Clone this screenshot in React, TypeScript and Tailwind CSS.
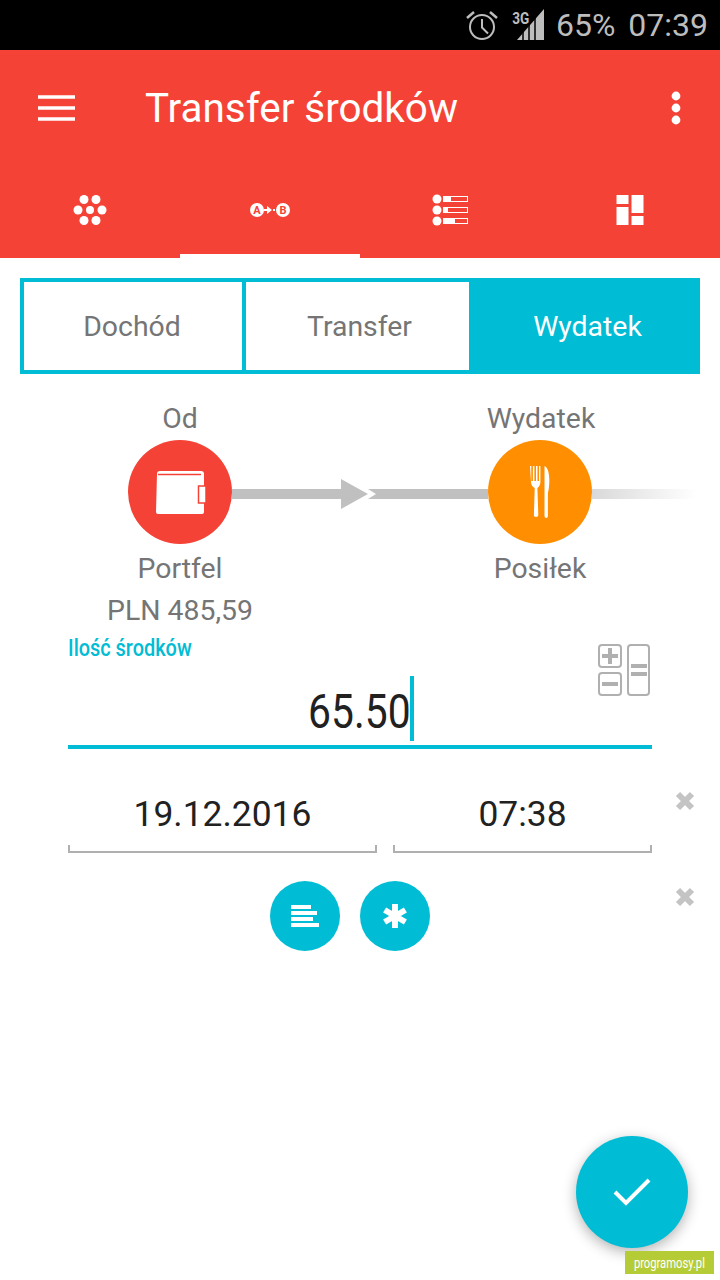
import React from "react";

const X = () => (
  <svg width="20" height="20" viewBox="0 0 20 20" className="block">
    <path d="M3 3 L17 17 M17 3 L3 17" stroke="#c4c4c4" strokeWidth="6" />
  </svg>
);

const Bracket = ({ text, className }: { text: string; className: string }) => (
  <div className={"flex flex-col " + className}>
    <div className="h-[61px] flex items-center justify-center text-[35.4px] leading-none text-[#212121]">{text}</div>
    <div className="h-[8px] border-x-2 border-b-2 border-[#b0b0b0]" />
  </div>
);

export default function App() {
  return (
    <div className="relative w-[720px] h-[1280px] overflow-hidden bg-white font-['Roboto',sans-serif]">
      {/* status bar */}
      <div className="h-[50px] bg-black flex items-center justify-end pr-[12px] text-[#bdbdbd] text-[32px] leading-none">
        <svg width="34" height="32" viewBox="0 0 34 32" className="mr-[13px]" fill="none" stroke="#bdbdbd" strokeWidth="2">
          <circle cx="17" cy="18" r="12" />
          <path d="M17 10v8.5l6 6" />
          <path d="M2 9 L9 3 M32 9 L25 3" strokeWidth="2.5" />
        </svg>
        <div className="relative w-[34px] h-[32px] mr-[10px]">
          <svg width="34" height="32" viewBox="0 0 34 32" className="absolute inset-0">
            <path d="M5 31 L32 0 V31 Z" fill="#bdbdbd" />
            <path d="M11 20 V31 M17 14 V31 M23 8 V31" stroke="#000" strokeWidth="1.5" />
          </svg>
          <span className="absolute left-[-2px] top-[1px] text-[17px] font-bold leading-none text-[#bdbdbd] scale-x-[0.8]">3G</span>
        </div>
        <span className="mr-[13px]">65%</span>
        <span>07:39</span>
      </div>

      {/* app bar */}
      <div className="h-[208px] bg-[#f44336] flex flex-col">
        <div className="h-[116px] flex items-center pl-[38px] pr-[38px]">
          <svg width="37" height="26" viewBox="0 0 37 26">
            <path d="M0 2h37M0 13h37M0 24h37" stroke="#fff" strokeWidth="3.6" />
          </svg>
          <h1 className="ml-[70px] pt-[2px] flex-1 text-white text-[40.4px] leading-none font-normal">Transfer środków</h1>
          <svg width="10" height="34" viewBox="0 0 10 34" className="mr-[1px]">
            <circle cx="5" cy="5" r="4.4" fill="#fff" />
            <circle cx="5" cy="17" r="4.4" fill="#fff" />
            <circle cx="5" cy="29" r="4.4" fill="#fff" />
          </svg>
        </div>
        <div className="flex-1 grid grid-cols-4">
          <div className="flex items-center justify-center pb-[4px]">
            <svg width="34" height="30" viewBox="0 0 34 30" fill="#fff">
              <circle cx="11" cy="4.5" r="4.5" /><circle cx="23" cy="4.5" r="4.5" />
              <circle cx="5" cy="15" r="4.5" /><circle cx="17" cy="15" r="4" /><circle cx="29" cy="15" r="4.5" />
              <circle cx="11" cy="25.5" r="4.5" /><circle cx="23" cy="25.5" r="4.5" />
            </svg>
          </div>
          <div className="flex items-center justify-center border-b-4 border-white">
            <svg width="40" height="16" viewBox="0 0 40 16">
              <circle cx="7" cy="8" r="7" fill="#fff" />
              <circle cx="33" cy="8" r="7" fill="#fff" />
              <text x="7" y="12" fontSize="11" fontWeight="700" textAnchor="middle" fill="#f44336" fontFamily="Roboto">A</text>
              <text x="33" y="12" fontSize="11" fontWeight="700" textAnchor="middle" fill="#f44336" fontFamily="Roboto">B</text>
              <path d="M14 7h3V4l5 4-5 4V9h-3z M23 7h2v2h-2z" fill="#fff" />
            </svg>
          </div>
          <div className="flex items-center justify-center pb-[4px]">
            <svg width="36" height="32" viewBox="0 0 36 32" fill="#fff">
              <circle cx="5" cy="5" r="4.5" /><circle cx="5" cy="16" r="4.5" /><circle cx="5" cy="27" r="4.5" />
              <rect x="11.5" y="2.5" width="24" height="5" fill="none" stroke="#fff" />
              <rect x="11" y="2" width="8" height="6" />
              <rect x="11.5" y="13.5" width="24" height="5" fill="none" stroke="#fff" />
              <rect x="11" y="13" width="5" height="6" />
              <rect x="11.5" y="24.5" width="24" height="5" fill="none" stroke="#fff" />
              <rect x="11" y="24" width="12" height="6" />
            </svg>
          </div>
          <div className="flex items-center justify-center pb-[4px]">
            <svg width="28" height="30" viewBox="0 0 28 30" fill="#fff">
              <rect x="0.5" y="0" width="12" height="9" /><rect x="0.5" y="12" width="12" height="18" />
              <rect x="15.5" y="0" width="12" height="18" /><rect x="15.5" y="21" width="12" height="9" />
            </svg>
          </div>
        </div>
      </div>

      {/* segmented control */}
      <div className="mx-[20px] mt-[20px] h-[96px] border-4 border-[#00bcd4] grid grid-cols-[218px_227px_1fr] text-[28.4px] text-[#757575]">
        <div className="flex items-center justify-center pt-[3px] pr-[2px]">Dochód</div>
        <div className="flex items-center justify-center pt-[3px] pl-[4px] border-l-4 border-[#00bcd4]">Transfer</div>
        <div className="flex items-center justify-center pt-[3px] pl-[10px] bg-[#00bcd4] text-white">Wydatek</div>
      </div>

      {/* flow */}
      <div className="grid grid-cols-2 mt-[27px] h-[36px] text-[28.4px] leading-[36px] text-[#757575] text-center">
        <div>Od</div>
        <div className="pl-[2px]">Wydatek</div>
      </div>
      <div className="flex items-center mt-[3px] pl-[128px] pr-[24px] h-[104px]">
        <div className="w-[104px] h-[104px] rounded-full bg-[#f44336] flex items-center justify-center shrink-0">
          <svg width="52" height="46" viewBox="0 0 52 46" className="ml-[2px]">
            <path d="M2 5a3 3 0 0 1 3-3h41a3 3 0 0 1 3 3v38a2 2 0 0 1-2 2H3a2 2 0 0 1-2-2z" fill="#fff" />
            <path d="M3 5.5 h43" stroke="#f44336" strokeWidth="1.6" />
            <rect x="43.5" y="17" width="7.5" height="17" fill="#fff" stroke="#f44336" strokeWidth="1.5" />
          </svg>
        </div>
        <div className="flex-1 flex items-center mt-[4px] h-[30px] overflow-hidden">
          <svg width="256" height="30" viewBox="0 0 256 30" className="block">
            <path d="M0 10h109V0l27 15-27 15V20H0z" fill="#c0c0c0" />
            <path d="M136 10h120v10H136l8-5z" fill="#c0c0c0" />
          </svg>
        </div>
        <div className="w-[104px] h-[104px] rounded-full bg-[#ff8f00] flex items-center justify-center shrink-0">
          <svg width="20" height="54" viewBox="0 0 20 54" fill="#fff">
            <path d="M0 1h1.3v15h1.6V1h1.5v15H6V1h1.5v15H9V1h1.4v16c0 3.5-2 5-3 6l.9 27c0 2.5-4.6 2.5-4.4 0l.8-27c-1.5-1-3.7-2.5-3.7-6z" />
            <path d="M14.5 1c3.5 1.5 5 8 4.8 16-.1 5-1 10-1.4 11V51c0 2.5-3.4 2.5-3.4 0z" />
          </svg>
        </div>
        <div className="w-[104px] h-[10px] mt-[4px] bg-gradient-to-r from-[#d9d9d9] to-white shrink-0" />
      </div>
      <div className="grid grid-cols-2 text-[28.4px] text-[#757575] text-center mt-[7px]">
        <div className="leading-[36px]">
          Portfel
          <div className="mt-[6px]">PLN 485,59</div>
        </div>
        <div className="leading-[36px]">Posiłek</div>
      </div>

      {/* amount */}
      <div className="relative mx-[68px] mt-[5px]">
        <div className="text-[#00bcd4] text-[24px] font-medium leading-[28px] origin-left scale-x-[0.83] w-max">Ilość środków</div>
        <div className="h-[86px] mt-[1px] flex items-start justify-center border-b-4 border-[#00bcd4] pt-[13px] pr-[16px]">
          <span className="text-[#212121] text-[48px] leading-[72px] scale-x-[0.85] origin-right">65.50</span>
          <span className="w-[4px] h-[65px] bg-[#00bcd4]" />
        </div>
        <div className="absolute right-[2px] top-[10px] flex gap-[5px]">
          <div className="flex flex-col gap-[4px]">
            <div className="w-[24px] h-[24px] rounded-[4px] border-2 border-[#b0b0b0] flex items-center justify-center">
              <svg width="16" height="16" viewBox="0 0 16 16"><path d="M8 0v16M0 8h16" stroke="#b0b0b0" strokeWidth="4" /></svg>
            </div>
            <div className="w-[24px] h-[24px] rounded-[4px] border-2 border-[#b0b0b0] flex items-center justify-center">
              <div className="w-[16px] h-[4px] bg-[#b0b0b0]" />
            </div>
          </div>
          <div className="w-[23px] h-[52px] rounded-[4px] border-2 border-[#b0b0b0] flex flex-col items-center gap-[4px] pt-[18px]">
            <div className="w-[16px] h-[4px] bg-[#b0b0b0]" />
            <div className="w-[16px] h-[4px] bg-[#b0b0b0]" />
          </div>
        </div>
      </div>

      {/* date and time */}
      <div className="flex mt-[35px] pl-[68px] pr-[25px]">
        <Bracket text="19.12.2016" className="w-[309px]" />
        <Bracket text="07:38" className="w-[259px] ml-[16px]" />
        <div className="ml-[23px] mt-[7px]"><X /></div>
      </div>

      {/* extras */}
      <div className="flex mt-[28px] pl-[270px] pr-[25px]">
        <button className="w-[70px] h-[70px] rounded-full bg-[#00bcd4] flex items-center justify-center">
          <svg width="28" height="22" viewBox="0 0 28 22" fill="#fff">
            <rect x="0" y="0" width="20" height="4" /><rect x="0" y="6" width="26" height="4" />
            <rect x="0" y="12" width="22" height="4" /><rect x="0" y="18" width="28" height="4" />
          </svg>
        </button>
        <button className="ml-[20px] w-[70px] h-[70px] rounded-full bg-[#00bcd4] flex items-center justify-center">
          <svg width="24" height="24" viewBox="0 0 24 24">
            <path d="M12 0v24M1.6 6l20.8 12M22.4 6L1.6 18" stroke="#fff" strokeWidth="6" />
          </svg>
        </button>
        <div className="ml-[245px] mt-[6px]"><X /></div>
      </div>

      {/* floating action */}
      <button className="absolute left-[576px] top-[1136px] w-[112px] h-[112px] rounded-full bg-[#00bcd4] shadow-[0_4px_14px_rgba(0,0,0,0.3)] flex items-center justify-center">
        <svg width="38" height="28" viewBox="0 0 38 28" fill="none">
          <path d="M2 14 L13 25 L36 2" stroke="#fff" strokeWidth="4" />
        </svg>
      </button>
      <div className="absolute left-[625px] top-[1251px] w-[89px] h-[23px] bg-[#b5cc37] flex items-center justify-center text-white text-[14px] leading-none">
        <span className="scale-x-[0.8] whitespace-nowrap">programosy.pl</span>
      </div>
    </div>
  );
}
